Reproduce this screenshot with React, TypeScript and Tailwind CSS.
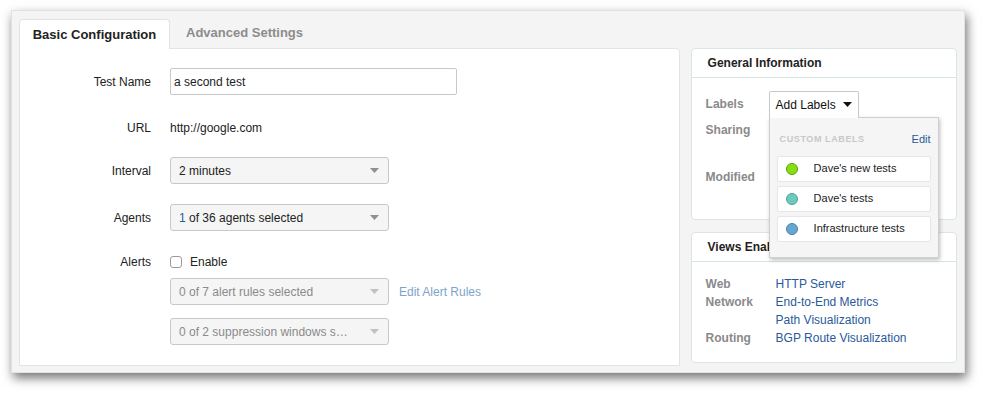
import React from "react";

const Caret = ({ color = "#8a8a8a", w = 9, h = 5 }: { color?: string; w?: number; h?: number }) => (
  <svg width={w} height={h} viewBox={`0 0 ${w} ${h}`} className="shrink-0">
    <path d={`M0 0 L${w} 0 L${w / 2} ${h} Z`} fill={color} />
  </svg>
);

const Select = ({ text, disabled }: { text: React.ReactNode; disabled?: boolean }) => (
  <div
    className={`flex items-center justify-between w-[219px] h-[27px] rounded-[3px] border border-[#c8c8c8] bg-[#f5f5f5] pl-[8px] pr-[9px] text-[12px] ${
      disabled ? "text-[#8a8a8a]" : "text-[#222]"
    }`}
  >
    <span className="truncate">{text}</span>
    <Caret color={disabled ? "#c0c0c0" : "#8f8f8f"} />
  </div>
);

const Row = ({ label, children, className = "" }: { label?: string; children: React.ReactNode; className?: string }) => (
  <div className={`flex items-center ${className}`}>
    <div className="w-[131px] text-right text-[12px] text-[#222] shrink-0">{label}</div>
    <div className="ml-[19px] flex items-center">{children}</div>
  </div>
);

const LabelItem = ({ color, border, text }: { color: string; border: string; text: string }) => (
  <div className="flex items-center h-[26px] bg-white border border-[#e6e6e6] rounded-[2px] px-[8px]">
    <span className="w-[12px] h-[12px] rounded-full border" style={{ background: color, borderColor: border }} />
    <span className="ml-[16px] text-[11px] text-[#222]">{text}</span>
  </div>
);

export default function App() {
  return (
    <div className="w-[983px] h-[393px] bg-white pt-[10px] pl-[11px]" style={{ fontFamily: '"Liberation Sans", Arial, sans-serif' }}>
      <div className="w-[954px] h-[363px] bg-[#f4f4f4] border border-[#e2e2e2] shadow-[2px_5px_10px_rgba(0,0,0,0.55)] flex pt-[7px] pl-[7px] pr-[7px] pb-[6px] gap-[11px]">
        {/* Left */}
        <div className="flex flex-col w-[662px]">
          <div className="flex items-end h-[30px]">
            <div className="h-[30px] w-[151px] bg-white border border-b-0 border-[#e3e3e3] rounded-t-[4px] flex items-center justify-center text-[13px] font-bold text-[#222] relative z-10 -mb-px">
              Basic Configuration
            </div>
            <div className="h-[30px] pl-[16px] flex items-center text-[13px] font-bold text-[#8c8c8c]">Advanced Settings</div>
          </div>
          <div className="flex-1 bg-white border border-[#e3e3e3] rounded-tr-[4px] pt-[19px]">
            <Row label="Test Name">
              <div className="w-[287px] h-[27px] border border-[#c8c8c8] rounded-[2px] flex items-center pl-[3px] text-[12px] text-[#222]">
                a second test
              </div>
            </Row>
            <Row label="URL" className="mt-[19px] h-[27px]">
              <span className="text-[12px] text-[#222]">http://google.com</span>
            </Row>
            <Row label="Interval" className="mt-[16px]">
              <Select text="2 minutes" />
            </Row>
            <Row label="Agents" className="mt-[20px]">
              <Select text={<><span className="text-[#2a5a9a]">1</span> of 36 agents selected</>} />
            </Row>
            <Row label="Alerts" className="mt-[19px] h-[24px]">
              <span className="w-[12px] h-[12px] border border-[#9a9a9a] rounded-[3px] bg-white" />
              <span className="ml-[8px] text-[12px] text-[#222]">Enable</span>
            </Row>
            <Row className="mt-[4px]">
              <Select text="0 of 7 alert rules selected" disabled />
              <span className="ml-[10px] text-[12px] text-[#7ea3ca]">Edit Alert Rules</span>
            </Row>
            <Row className="mt-[13px]">
              <Select text="0 of 2 suppression windows s…" disabled />
            </Row>
          </div>
        </div>

        {/* Right */}
        <div className="flex flex-col w-[267px] pt-[30px]">
          <div className="h-[172px] bg-white border border-[#dbe6e3] rounded-[4px]">
            <div className="h-[29px] border-b border-[#d6e6e1] flex items-center pl-[16px] text-[12px] font-bold text-[#222]">
              General Information
            </div>
            <div className="relative pl-[14px] pt-[13px] text-[12px]">
              <div className="flex items-center h-[26px]">
                <span className="w-[63px] font-bold text-[#8a8a8a]">Labels</span>
                <div className="relative">
                  <div className="h-[27px] px-[6px] flex items-center gap-[7px] bg-white border border-b-0 border-[#c9c9c9] rounded-t-[2px] text-[12px] text-[#111] relative z-20">
                    Add Labels <Caret color="#111" w={9} h={5} />
                  </div>
                  <div className="absolute left-0 top-[26px] w-[170px] h-[141px] bg-[#f5f5f5] border border-[#cfcfcf] shadow-[1px_2px_4px_rgba(0,0,0,0.25)] z-10 px-[7px]">
                    <div className="flex items-center justify-between h-[38px] pl-[3px] pt-[6px]">
                      <span className="text-[9px] font-bold text-[#c8c8c8] tracking-[0.6px]">CUSTOM LABELS</span>
                      <span className="text-[11px] text-[#2a5a9a]">Edit</span>
                    </div>
                    <div className="flex flex-col gap-[4px]">
                      <LabelItem color="#86e011" border="#5e9f0c" text="Dave's new tests" />
                      <LabelItem color="#6dcbbd" border="#48a597" text="Dave's tests" />
                      <LabelItem color="#68a6d2" border="#4783ad" text="Infrastructure tests" />
                    </div>
                  </div>
                </div>
              </div>
              <div className="h-[26px] flex items-center font-bold text-[#8a8a8a]">Sharing</div>
              <div className="h-[21px]" />
              <div className="h-[26px] flex items-center font-bold text-[#8a8a8a]">Modified</div>
            </div>
          </div>
          <div className="mt-[12px] h-[131px] bg-white border border-[#dbe6e3] rounded-[4px]">
            <div className="h-[29px] border-b border-[#d6e6e1] flex items-center pl-[16px] text-[12px] font-bold text-[#222]">
              Views Enabled
            </div>
            <div className="pl-[14px] pt-[13px] text-[12px] leading-[18px] grid grid-cols-[70px_1fr]">
              <span className="font-bold text-[#8a8a8a]">Web</span>
              <span className="text-[#2a5a9a]">HTTP Server</span>
              <span className="font-bold text-[#8a8a8a]">Network</span>
              <span className="text-[#2a5a9a]">End-to-End Metrics</span>
              <span />
              <span className="text-[#2a5a9a]">Path Visualization</span>
              <span className="font-bold text-[#8a8a8a]">Routing</span>
              <span className="text-[#2a5a9a]">BGP Route Visualization</span>
            </div>
          </div>
        </div>
      </div>
    </div>
  );
}
